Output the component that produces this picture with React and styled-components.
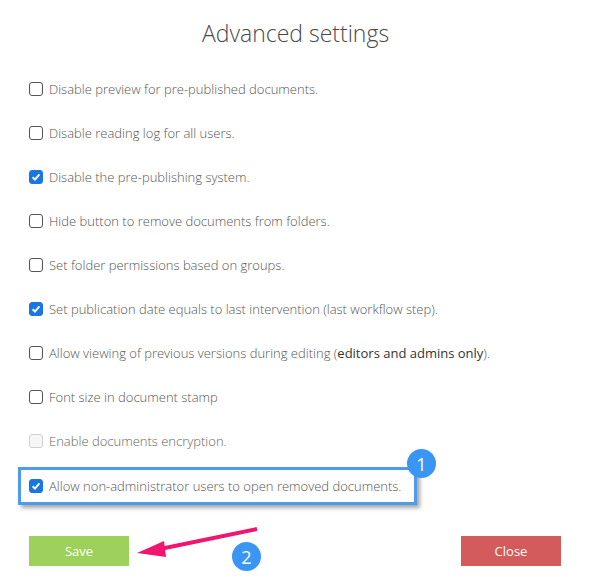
import React from "react";
import styled, { createGlobalStyle } from "styled-components";

const GlobalStyle = createGlobalStyle`
  body {
    margin: 0;
    background: #fff;
    font-family: "Segoe UI", "Open Sans", "Noto Sans", sans-serif;
  }
`;

const Page = styled.div`
  position: relative;
  width: 591px;
  height: 577px;
  overflow: hidden;
`;

const Title = styled.h1`
  margin: 0;
  height: 67px;
  display: flex;
  align-items: center;
  justify-content: center;
  font-size: 23px;
  font-weight: 300;
  color: #4a4a4a;
  padding-bottom: 1px;
  box-sizing: border-box;
`;

const List = styled.div`
  display: flex;
  flex-direction: column;
  padding-left: 29px;
`;

const Row = styled.label`
  position: relative;
  display: flex;
  align-items: center;
  gap: 6px;
  height: 44px;
  font-size: 13px;
  font-weight: 300;
  color: ${(p) => (p.$disabled ? "#666" : "#555")};
`;

const HighlightRow = styled(Row)`
  align-self: flex-start;
  height: 32px;
  margin: 4px 0 0 -11px;
  padding: 0 13px 0 8px;
  border: 3px solid #4c9ce9;
  box-shadow: 3px 3px 4px rgba(0, 0, 0, 0.35);
`;

const Box = styled.span`
  width: 14px;
  height: 14px;
  box-sizing: border-box;
  border-radius: 3px;
  flex-shrink: 0;
  display: flex;
  align-items: center;
  justify-content: center;
  border: 1px solid ${(p) => (p.$checked ? "#1a76e0" : p.$disabled ? "#d0d0d0" : "#555")};
  background: ${(p) => (p.$checked ? "#1a76e0" : p.$disabled ? "#f6f6f6" : "#fff")};
`;

const Strong = styled.span`
  font-weight: 500;
  color: #333;
`;

const Badge = styled.span`
  position: absolute;
  width: 29px;
  height: 29px;
  border-radius: 50%;
  background: #3a96f4;
  color: #fff;
  font-size: 18px;
  font-weight: 400;
  display: flex;
  align-items: center;
  justify-content: center;
  top: ${(p) => p.$top}px;
  left: ${(p) => p.$left}px;
`;

const Footer = styled.div`
  display: flex;
  justify-content: space-between;
  padding: 31px 30px 0 29px;
`;

const Button = styled.button`
  width: 100px;
  height: 30px;
  border: none;
  border-radius: 0;
  color: #fff;
  font-family: inherit;
  font-size: 13px;
  font-weight: 400;
  background: ${(p) => (p.$variant === "save" ? "#9ed15b" : "#d45b5b")};
`;

const Overlay = styled.svg`
  position: absolute;
  left: 0;
  top: 0;
  pointer-events: none;
`;

const Check = () => (
  <svg width="10" height="10" viewBox="0 0 10 10">
    <path d="M1.6 5.2 L4 7.5 L8.4 2.4" fill="none" stroke="#fff" strokeWidth="1.9" />
  </svg>
);

const Checkbox = ({ checked, disabled }) => (
  <Box $checked={checked} $disabled={disabled}>
    {checked && <Check />}
  </Box>
);

const settings = [
  { label: "Disable preview for pre-published documents." },
  { label: "Disable reading log for all users." },
  { label: "Disable the pre-publishing system.", checked: true },
  { label: "Hide button to remove documents from folders." },
  { label: "Set folder permissions based on groups." },
  { label: "Set publication date equals to last intervention (last workflow step).", checked: true },
  {
    label: (
      <span>
        Allow viewing of previous versions during editing (<Strong>editors and admins only</Strong>).
      </span>
    ),
  },
  { label: "Font size in document stamp" },
  { label: "Enable documents encryption.", disabled: true },
];

const App = () => {
  return (
    <Page>
      <GlobalStyle />
      <Title>Advanced settings</Title>
      <List>
        {settings.map((s, i) => (
          <Row key={i} $disabled={s.disabled}>
            <Checkbox checked={s.checked} disabled={s.disabled} />
            {s.label}
          </Row>
        ))}
        <HighlightRow>
          <Checkbox checked />
          Allow non-administrator users to open removed documents.
          <Badge $top={-21} $left={386}>1</Badge>
        </HighlightRow>
      </List>
      <Footer>
        <Button $variant="save">Save</Button>
        <Button $variant="close">Close</Button>
      </Footer>
      <Overlay width="591" height="577">
        <line x1="257" y1="529" x2="160" y2="549" stroke="#f0166f" strokeWidth="4" />
        <polygon points="137,553 164,541 166,557" fill="#f0166f" />
      </Overlay>
      <Badge $top={542} $left={232}>2</Badge>
    </Page>
  );
};

export default App;
